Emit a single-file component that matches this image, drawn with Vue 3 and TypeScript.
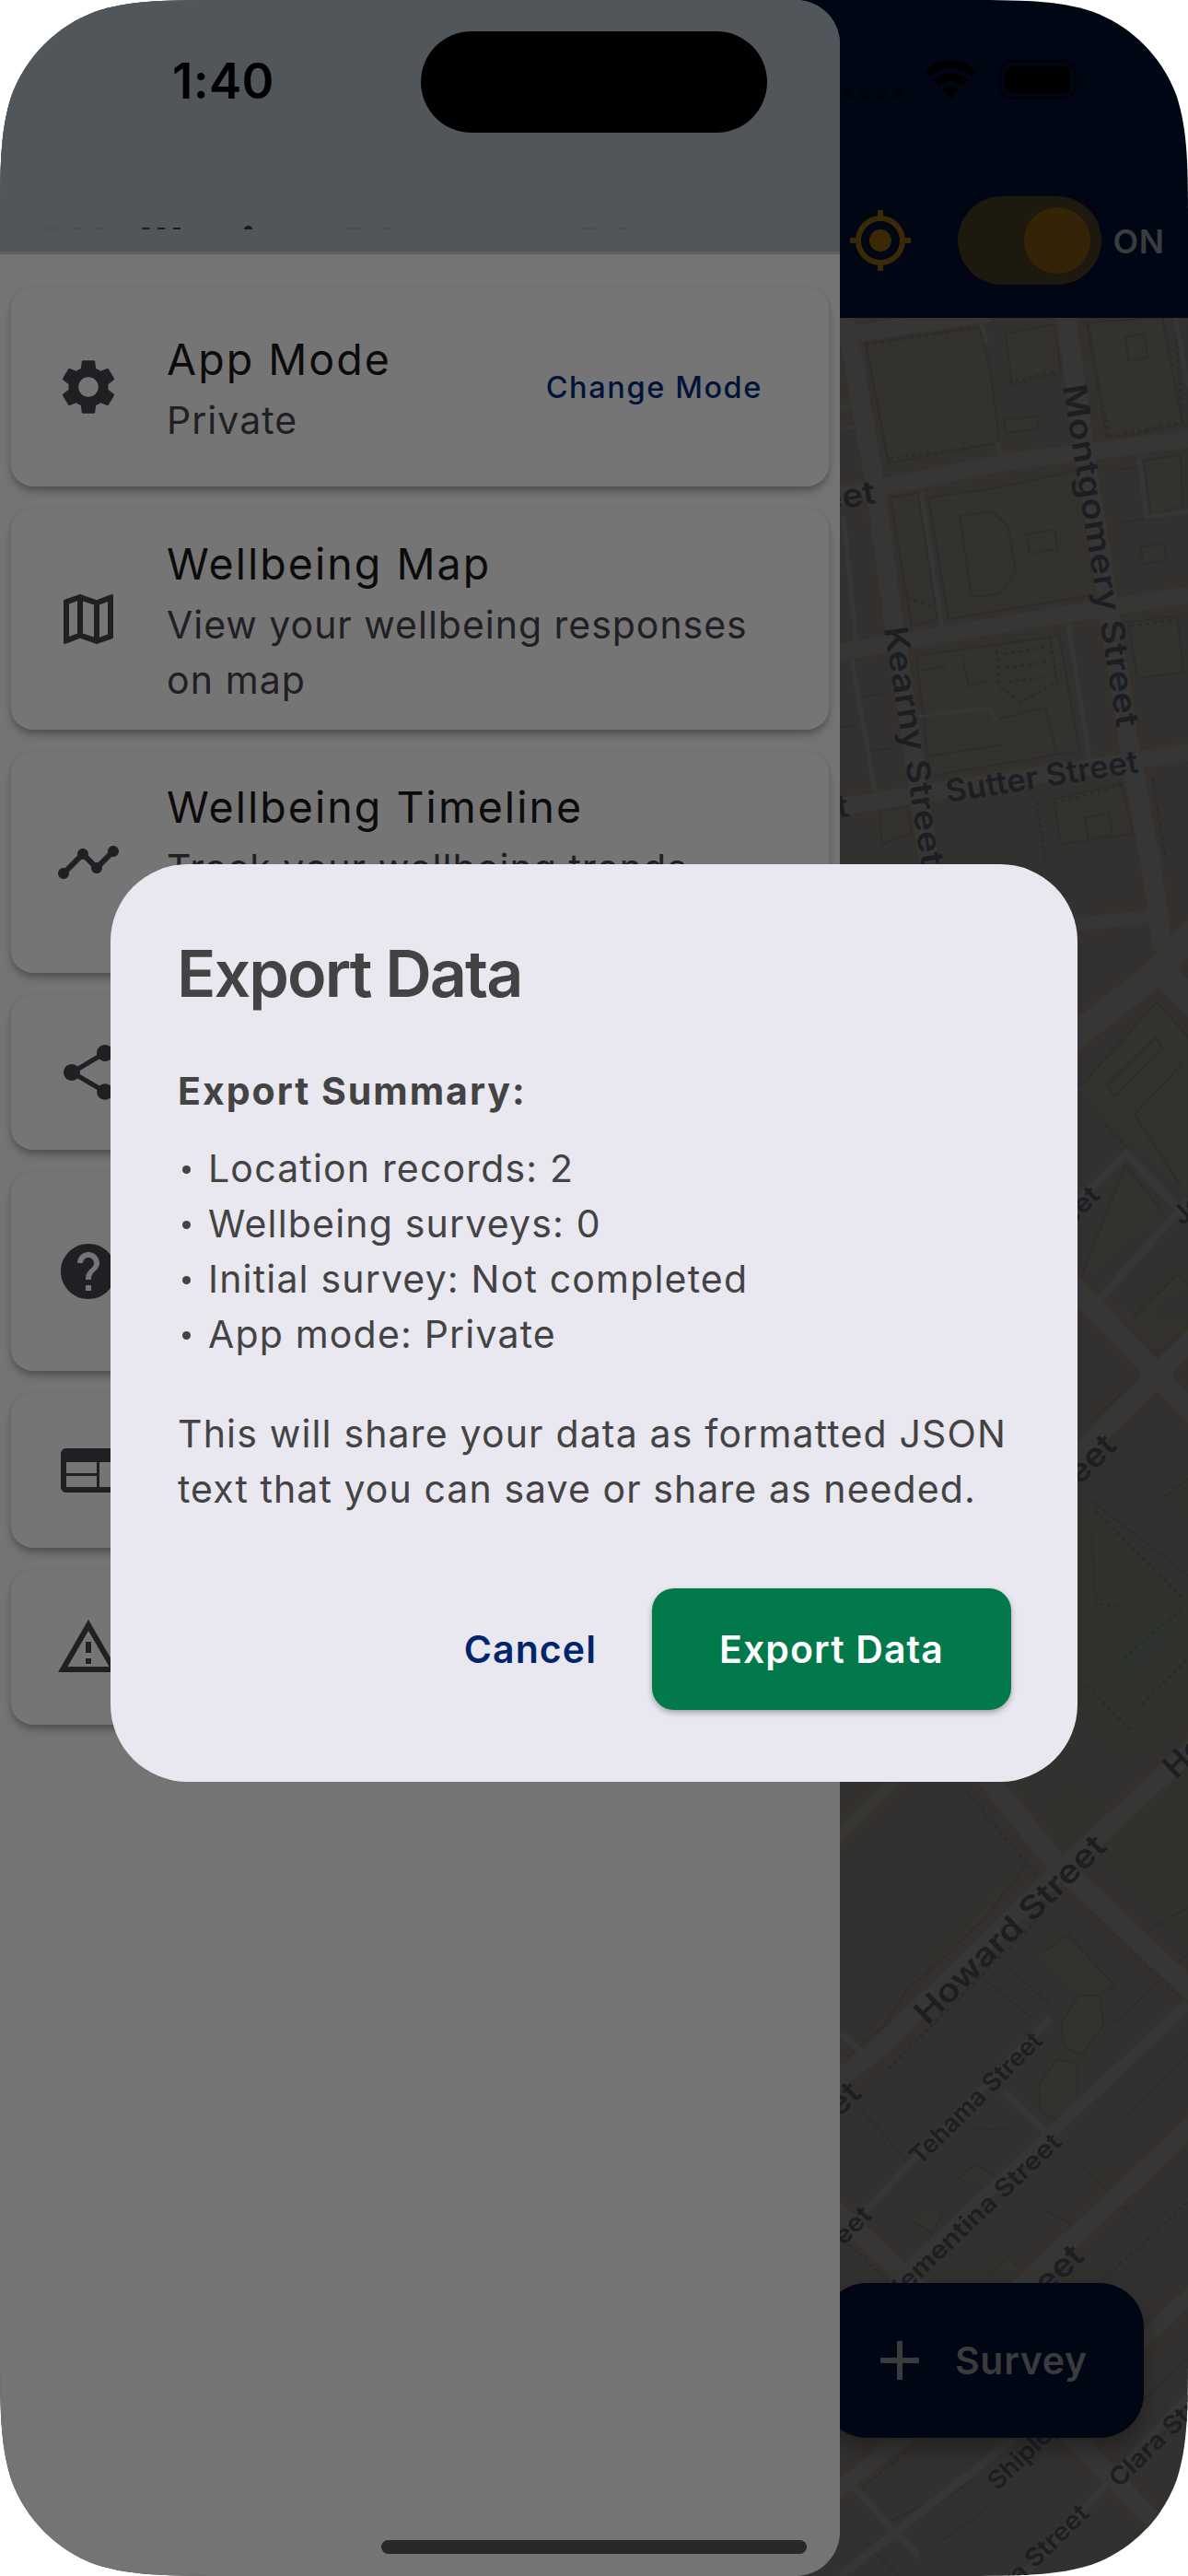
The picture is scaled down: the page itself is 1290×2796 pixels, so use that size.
<script setup lang="ts">
interface MenuLine {
  text: string
  spacing: number
}

interface MenuEntry {
  icon: string
  height: number
  title?: string
  lines?: MenuLine[]
  action?: string
}

interface Road {
  d: string
  w: number
  casing?: boolean
}

interface Label {
  text: string
  x: number
  y: number
  angle: number
  size: number
  length?: number
  end?: boolean
}

const icons = {
  gear: 'M19.14 12.94c.04-.3.06-.61.06-.94 0-.32-.02-.64-.07-.94l2.03-1.58c.18-.14.23-.41.12-.61l-1.92-3.32c-.12-.22-.37-.29-.59-.22l-2.39.96c-.5-.38-1.03-.7-1.62-.94l-.36-2.54c-.04-.24-.24-.41-.48-.41h-3.84c-.24 0-.43.17-.47.41l-.36 2.54c-.59.24-1.13.57-1.62.94l-2.39-.96c-.22-.08-.47 0-.59.22L2.74 8.87c-.12.21-.08.47.12.61l2.03 1.58c-.05.3-.09.63-.09.94s.02.64.07.94l-2.03 1.58c-.18.14-.23.41-.12.61l1.92 3.32c.12.22.37.29.59.22l2.39-.96c.5.38 1.03.7 1.62.94l.36 2.54c.05.24.24.41.48.41h3.84c.24 0 .44-.17.47-.41l.36-2.54c.59-.24 1.13-.56 1.62-.94l2.39.96c.22.08.47 0 .59-.22l1.92-3.32c.12-.22.07-.47-.12-.61l-2.01-1.58zM12 15.6c-1.98 0-3.6-1.62-3.6-3.6s1.62-3.6 3.6-3.6 3.6 1.62 3.6 3.6-1.62 3.6-3.6 3.6z',
  map: 'M20.5 3l-.16.03L15 5.1 9 3 3.36 4.9c-.21.07-.36.25-.36.48V20.5c0 .28.22.5.5.5l.16-.03L9 18.9l6 2.1 5.64-1.9c.21-.07.36-.25.36-.48V3.5c0-.28-.22-.5-.5-.5zM10 5.47l4 1.4v11.66l-4-1.4V5.47zm-5 .99l3-1.01v11.7l-3 1.16V6.46zm14 11.08l-3 1.01V6.86l3-1.16v11.84z',
  timeline: 'M23 8c0 1.1-.9 2-2 2-.18 0-.35-.02-.51-.07l-3.56 3.55c.05.16.07.34.07.52 0 1.1-.9 2-2 2s-2-.9-2-2c0-.18.02-.36.07-.52l-2.55-2.55c-.16.05-.34.07-.52.07s-.36-.02-.52-.07l-4.55 4.56c.05.16.07.33.07.51 0 1.1-.9 2-2 2s-2-.9-2-2 .9-2 2-2c.18 0 .35.02.51.07l4.56-4.55C8.02 9.36 8 9.18 8 9c0-1.1.9-2 2-2s2 .9 2 2c0 .18-.02.36-.07.52l2.55 2.55c.16-.05.34-.07.52-.07s.36.02.52.07l3.55-3.56C19.02 8.35 19 8.18 19 8c0-1.1.9-2 2-2s2 .9 2 2z',
  share: 'M18 16.08c-.76 0-1.44.3-1.96.77L8.91 12.7c.05-.23.09-.46.09-.7s-.04-.47-.09-.7l7.05-4.11c.54.5 1.25.81 2.04.81 1.66 0 3-1.34 3-3s-1.34-3-3-3-3 1.34-3 3c0 .24.04.47.09.7L8.04 9.81C7.5 9.31 6.79 9 6 9c-1.66 0-3 1.34-3 3s1.34 3 3 3c.79 0 1.5-.31 2.04-.81l7.12 4.16c-.05.21-.08.43-.08.65 0 1.61 1.31 2.92 2.92 2.92s2.92-1.31 2.92-2.92-1.31-2.92-2.92-2.92z',
  help: 'M12 2C6.48 2 2 6.48 2 12s4.48 10 10 10 10-4.48 10-10S17.52 2 12 2zm1 17h-2v-2h2v2zm2.07-7.75l-.9.92C13.45 12.9 13 13.5 13 15h-2v-.5c0-1.1.45-2.1 1.17-2.83l1.24-1.26c.37-.36.59-.86.59-1.41 0-1.1-.9-2-2-2s-2 .9-2 2H8c0-2.21 1.79-4 4-4s4 1.79 4 4c0 .88-.36 1.68-.93 2.25z',
  web: 'M20 4H4c-1.1 0-1.99.9-1.99 2L2 18c0 1.1.9 2 2 2h16c1.1 0 2-.9 2-2V6c0-1.1-.9-2-2-2zm-5 14H4v-4h11v4zm0-5H4V9h11v4zm5 5h-4V9h4v9z',
  warning: 'M12 5.99L19.53 19H4.47L12 5.99M12 2L1 21h22L12 2zm1 14h-2v2h2v-2zm0-6h-2v4h2v-4z',
  target: 'M12 8c-2.21 0-4 1.79-4 4s1.79 4 4 4 4-1.79 4-4-1.79-4-4-4zm8.94 3c-.46-4.17-3.77-7.48-7.94-7.94V1h-2v2.06C6.83 3.52 3.52 6.83 3.06 11H1v2h2.06c.46 4.17 3.77 7.48 7.94 7.94V23h2v-2.06c4.17-.46 7.48-3.77 7.94-7.94H23v-2h-2.06zM12 19c-3.87 0-7-3.13-7-7s3.13-7 7-7 7 3.13 7 7-3.13 7-7 7z',
  plus: 'M19 13h-6v6h-2v-6H5v-2h6V5h2v6h6v2z',
}

const menu: MenuEntry[] = [
  { icon: icons.gear, height: 216, title: 'App Mode', lines: [{ text: 'Private', spacing: 1.05 }], action: 'Change Mode' },
  {
    icon: icons.map,
    height: 240,
    title: 'Wellbeing Map',
    lines: [{ text: 'View your wellbeing responses', spacing: 0.98 }, { text: 'on map', spacing: 1.1 }],
  },
  {
    icon: icons.timeline,
    height: 240,
    title: 'Wellbeing Timeline',
    lines: [{ text: 'Track your wellbeing trends', spacing: 1.05 }, { text: '', spacing: 0 }],
  },
  { icon: icons.share, height: 168 },
  { icon: icons.help, height: 216 },
  { icon: icons.web, height: 168 },
  { icon: icons.warning, height: 168 },
]

const summary = [
  'Location records: 2',
  'Wellbeing surveys: 0',
  'Initial survey: Not completed',
  'App mode: Private',
]

const roads: Road[] = [
  { d: 'M1000 534L1023 680M1160 678L1183 822M925 716L950 858M1237 498L1245 561L1290 555M1065 350L1072 372M1083 480L1088 500M916 560L930 700M1276 345L1290 420', w: 5 },
  { d: 'M996 778L1075 768L1082 782M912 442L930 440M912 466L930 463', w: 4 },
  { d: 'M1170 1304L1223 1252L1290 1322M1190 1415L1290 1303', w: 9 },
  { d: 'M912 2428L1140 2191M1090 2270L1145 2322M912 2206L945 2236M927 2700L997 2774', w: 8 },
  { d: 'M970 2477L1290 2175', w: 13 },
  { d: 'M912 2796L1110 2640M1110 2796L1290 2600', w: 9 },
  { d: 'M917 345L925 380L950 526L972 688L997 854L1012 960', w: 20, casing: true },
  { d: 'M1157 340L1179 498L1203 655L1227 814L1250 940L1263 1030', w: 21, casing: true },
  { d: 'M905 366L1075 340', w: 18, casing: true },
  { d: 'M905 538L957 529L1090 502L1295 476', w: 18, casing: true },
  { d: 'M905 709L1100 676L1295 645', w: 18, casing: true },
  { d: 'M905 877L1100 845L1295 816', w: 18, casing: true },
  { d: 'M1150 1005L1258 994', w: 14, casing: true },
  { d: 'M1140 1146L1253 1058L1300 1008M1260 1052L1300 1094', w: 28, casing: true },
  { d: 'M1150 1380L1248 1483L1300 1540M1150 1603L1258 1490L1300 1448', w: 22, casing: true },
  { d: 'M905 1998L985 1920', w: 12, casing: true },
  { d: 'M905 2261L950 2227L1143 2038L1300 1893', w: 20, casing: true },
  { d: 'M1060 1915L1145 2020L1300 2166', w: 22, casing: true },
  { d: 'M1090 2500L1300 2302', w: 20, casing: true },
  { d: 'M905 2396L1167 2648L1300 2784', w: 20, casing: true },
  { d: 'M905 2706L1090 2560M1225 2556L1300 2484', w: 16, casing: true },
]

const labels: Label[] = [
  { text: 'Montgomery Street', x: 1154, y: 419, angle: 81, size: 35, length: 376 },
  { text: 'Kearny Street', x: 960, y: 682, angle: 81, size: 35, length: 262 },
  { text: 'Sutter Street', x: 1029, y: 871, angle: -9, size: 34, length: 211 },
  { text: 'Street', x: 952, y: 546, angle: -9, size: 35, length: 112, end: true },
  { text: 'Street', x: 923, y: 886, angle: -9, size: 34, length: 108, end: true },
  { text: 'Street', x: 1196, y: 1299, angle: -45, size: 28, length: 88, end: true },
  { text: 'Jessie Street', x: 1284, y: 1331, angle: -45, size: 28 },
  { text: 'Street', x: 1214, y: 1571, angle: -45, size: 35, length: 112, end: true },
  { text: 'Howard Street', x: 1277, y: 1932, angle: -44, size: 35 },
  { text: 'Howard Street', x: 1007, y: 2199, angle: -44.5, size: 35, length: 275 },
  { text: 'Street', x: 937, y: 2274, angle: -44, size: 35, length: 112, end: true },
  { text: 'Tehama Street', x: 999, y: 2351, angle: -45, size: 27, length: 190 },
  { text: 'Street', x: 948, y: 2406, angle: -45, size: 27, length: 86, end: true },
  { text: 'Clementina Street', x: 1154, y: 2327, angle: -43.5, size: 27, length: 262, end: true },
  { text: 'Street', x: 1179, y: 2451, angle: -44, size: 35, length: 112, end: true },
  { text: 'Shipley Street', x: 1083, y: 2704, angle: -44, size: 27, length: 190 },
  { text: 'Clara Street', x: 1215, y: 2701, angle: -44, size: 27, length: 165 },
  { text: 'Clara Street', x: 1184, y: 2730, angle: -44, size: 27, length: 165, end: true },
]
</script>

<template>
  <div class="screen">
    <div class="app">
      <header class="appbar">
        <svg class="icon target" viewBox="0 0 24 24"><path :d="icons.target" /></svg>
        <div class="switch"><span class="thumb"></span></div>
        <span class="on">ON</span>
      </header>
      <svg class="map" viewBox="0 345 1290 2451">
        <rect y="345" width="1290" height="2451" fill="#32312f" />
        <path class="park" d="M1165 1630L1185 1635L1290 1743V1865L1227 1909L1165 1852Z" />
        <path class="park" d="M1270 1625L1290 1612V1648Z" />
        <path class="trees" d="M1135 1968L1170 1945L1200 1965L1160 2005ZM1215 1990L1290 1925V2105L1212 2030Z" />
        <path d="M1208 1826L1275 1757L1262 1780Z" fill="#2b3134" />
        <g class="blocks">
          <path d="M940 372L1063 354L1075 400L1085 480L965 503Z" />
          <path d="M1092 362L1145 352L1152 405L1099 417Z" />
          <path d="M1180 350L1262 345L1284 460L1202 478Z" />
          <path d="M1222 366L1242 362L1246 388L1226 392Z" />
          <path d="M1090 456L1126 452L1128 465L1092 470Z" />
          <path d="M967 540L997 535L1018 672L990 680Z" />
          <path d="M1008 540L1080 530L1172 510L1190 645L1030 672Z" />
          <path d="M1042 560L1078 555L1095 572L1103 620L1085 645L1055 648Z" />
          <path d="M1114 580L1146 575L1148 596L1118 601Z" />
          <path d="M1242 500L1282 494L1284 550L1250 560Z" />
          <path d="M1215 510L1238 506M1212 568L1290 556M1238 594L1264 590L1266 608L1242 612Z" />
          <path d="M995 712L1150 690L1172 815L1010 842Z" />
          <path d="M1225 676L1278 668L1285 730L1235 736Z" />
          <path d="M1045 715L1052 745L1074 738M1000 728L1028 722M1085 780L1135 768L1148 820" />
          <path d="M1000 822L1090 808M938 756L965 752M946 815L970 812M912 790L930 786" />
          <path d="M1144 868L1218 850L1230 905L1152 916Z" />
          <path d="M1178 888L1205 882L1208 905L1182 912ZM955 880L985 876L990 905L958 916Z" />
          <path d="M1172 1180L1256 1088L1290 1125V1300M1202 1178L1255 1126L1263 1138L1210 1190ZM1232 1210L1284 1154M1232 1210L1284 1290" />
          <path d="M1172 1390L1222 1265L1262 1315M1200 1418L1256 1470L1290 1440M1230 1430L1280 1382L1290 1395" />
          <path d="M1182 1546L1238 1494M1180 1625L1290 1710M1265 1625L1290 1605" />
          <path d="M920 2232L960 2198L985 2160L1030 2120L1070 2080L1118 2020M1065 2145L1120 2190M1095 2135L1142 2178M1130 2120L1160 2100L1210 2155L1180 2175" />
          <path d="M1152 2196L1172 2166L1195 2166L1198 2198L1175 2230L1155 2222Z" />
          <path d="M1128 2262L1148 2235L1170 2240L1170 2285L1150 2302L1130 2292Z" />
          <path d="M1240 2100L1290 2070M1212 2195L1290 2120M1220 2300L1290 2230M1175 2350L1235 2410M1135 2400L1185 2425" />
          <path d="M990 2410L1012 2424L1025 2400M1040 2365L1060 2348L1080 2362M935 2290L985 2345M1055 2310L1095 2312M1075 2470L1095 2450L1120 2475" />
          <path d="M960 2740L1000 2720L1000 2730L1060 2690M940 2760L975 2796M1020 2760L1075 2720M1225 2620L1290 2560M1240 2660L1290 2620" />
        </g>
        <g class="dots">
          <path d="M940 374L1062 356M940 374L964 498L1080 482M1094 416L1148 402M1182 352L1204 474M1204 474L1284 458M1276 350L1284 455" />
          <path d="M1082 700L1140 692L1148 740L1108 762L1085 745ZM1090 710L1135 702M1092 725L1140 718M1095 740L1135 735" />
          <path d="M1228 680L1278 672M1145 872L1220 852M1126 870L1135 935M1252 845L1265 930M985 648L1015 660" />
          <path d="M1190 1640L1285 1735M1185 1665L1190 1740L1220 1745M1220 1800L1285 1745M1180 1830L1230 1880M1240 1850L1290 1800M1200 1220L1225 1245" />
          <path d="M1050 1945L1130 2040M965 2245L1135 2075M1180 2070L1290 2175M1180 2490L1290 2390M915 2430L965 2477M930 2705L985 2660" />
        </g>
        <template v-for="(r, i) in roads" :key="'c' + i">
          <path v-if="r.casing" :d="r.d" fill="none" stroke="#393128" :stroke-width="r.w + 4" />
        </template>
        <path v-for="(r, i) in roads" :key="'r' + i" :d="r.d" fill="none" stroke="#363637" :stroke-width="r.w" />
        <text
          v-for="(l, i) in labels"
          :key="'t' + i"
          class="street"
          :transform="`translate(${l.x} ${l.y}) rotate(${l.angle})`"
          :font-size="l.size"
          :text-anchor="l.end ? 'end' : 'start'"
          :textLength="l.length"
          lengthAdjust="spacingAndGlyphs"
        >{{ l.text }}</text>
      </svg>
      <div class="fab">
        <svg class="icon" viewBox="0 0 24 24"><path :d="icons.plus" /></svg>
        <span>Survey</span>
      </div>
    </div>

    <aside class="drawer">
      <div class="drawer-head">
        <div class="drawer-title"><span class="faint">W</span>ellbeing <span class="faint">M</span>apper <span class="faint">M</span>enu</div>
      </div>
      <nav class="cards">
        <div v-for="(m, i) in menu" :key="i" class="card" :style="{ height: m.height + 'px' }">
          <svg class="icon" viewBox="0 0 24 24"><path :d="m.icon" /></svg>
          <div v-if="m.title" class="card-text">
            <div class="card-title">{{ m.title }}</div>
            <div v-for="(l, j) in m.lines" :key="j" class="card-line" :style="{ letterSpacing: l.spacing + 'px' }">{{ l.text }}</div>
          </div>
          <span v-if="m.action" class="card-action">{{ m.action }}</span>
        </div>
      </nav>
    </aside>

    <div class="clock">1:40</div>
    <div class="island"></div>
    <svg class="status" viewBox="912 60 270 52">
      <g fill="#00030b">
        <circle cx="921.3" cy="102" r="5.5" /><circle cx="939.7" cy="102" r="5.5" />
        <circle cx="957.7" cy="102" r="5.5" /><circle cx="975.7" cy="102" r="5.5" />
      </g>
      <g fill="#000">
        <path d="M1032.500 66C1043.500 66 1053.500 70 1061 77.500L1055.500 83C1049.300 77.200 1041.200 74 1032.500 74S1015.700 77.200 1009.500 83L1004 77.500C1011.500 70 1021.500 66 1032.500 66Z" />
        <path d="M1032.500 79.500C1039.700 79.500 1046.200 82.200 1051.200 87L1045.500 92.700C1042 89.500 1037.500 87.700 1032.500 87.700S1023 89.500 1019.500 92.700L1013.800 87C1018.800 82.200 1025.300 79.500 1032.500 79.500Z" />
        <path d="M1032.500 93.500C1035.900 93.500 1039 94.800 1041.300 97L1033.700 106.200Q1032.500 107.400 1031.300 106.200L1023.700 97C1026 94.800 1029.100 93.500 1032.500 93.500Z" />
        <rect x="1091" y="72" width="71" height="29" rx="8.500" />
      </g>
      <rect x="1085.500" y="66.500" width="82" height="40" rx="13" fill="none" stroke="#00030b" stroke-width="3" />
      <path d="M1172 80Q1177 82 1177 86.500T1172 93Z" fill="#00030b" />
    </svg>

    <div class="overlay">
      <section class="dialog">
        <h1>Export Data</h1>
        <h2>Export Summary:</h2>
        <ul>
          <li v-for="s in summary" :key="s"><span class="bullet"></span>{{ s }}</li>
        </ul>
        <p>
          This will share your data as formatted JSON<br />
          <span class="tight">text that you can save or share as needed.</span>
        </p>
        <div class="actions">
          <button class="cancel">Cancel</button>
          <button class="export">Export Data</button>
        </div>
      </section>
    </div>
    <div class="home"></div>
  </div>
</template>

<style>
body {
  background: #fff;
}
</style>

<style scoped>
.screen {
  position: relative;
  width: 1290px;
  height: 2796px;
  overflow: hidden;
  font-family: Inter, 'Liberation Sans', sans-serif;
  clip-path: path('M252 0H1038C1110 0 1147 0 1186 12.400C1228.500 28 1262 61.500 1277.600 104C1290 143 1290 180 1290 252V2544C1290 2616 1290 2653 1277.600 2692C1262 2734.500 1228.500 2768 1186 2783.600C1147 2796 1110 2796 1038 2796H252C180 2796 143 2796 104 2783.600C61.500 2768 28 2734.500 12.400 2692C0 2653 0 2616 0 2544V252C0 180 0 143 12.400 104C28 61.500 61.500 28 104 12.400C143 0 180 0 252 0Z');
}
.icon {
  width: 72px;
  height: 72px;
  flex: none;
  fill: currentColor;
}
.app {
  display: flex;
  flex-direction: column;
  height: 2796px;
}
.appbar {
  box-sizing: border-box;
  height: 345px;
  flex: none;
  display: flex;
  align-items: center;
  justify-content: flex-end;
  padding: 177px 25px 0 0;
  background: #000613;
}
.target {
  color: #3a2905;
}
.switch {
  box-sizing: border-box;
  display: flex;
  align-items: center;
  justify-content: flex-end;
  width: 156px;
  height: 96px;
  margin-left: 48px;
  padding-right: 12px;
  border-radius: 48px;
  background: #1e190e;
}
.thumb {
  width: 72px;
  height: 72px;
  border-radius: 50%;
  background: #342405;
}
.on {
  margin-left: 12px;
  padding-top: 2px;
  font-size: 36px;
  font-weight: 600;
  letter-spacing: 0.8px;
  color: #3b3c3f;
}
.map {
  display: block;
  width: 1290px;
  height: 2451px;
}
.park {
  fill: #2f322d;
}
.trees {
  fill: #30322d;
}
.blocks path {
  fill: #33322f;
  stroke: #2e2d2b;
  stroke-width: 2;
}
.dots path {
  fill: none;
  stroke: #2b2b29;
  stroke-width: 2.5;
  stroke-dasharray: 4 4;
}
.street {
  font-family: Inter, sans-serif;
  font-weight: 600;
  fill: #1c1e22;
}
.fab {
  position: absolute;
  left: 893px;
  top: 2478px;
  box-sizing: border-box;
  display: flex;
  align-items: center;
  width: 349px;
  height: 168px;
  padding-left: 48px;
  border-radius: 48px;
  background: #000613;
  color: #3a3b3d;
  font-size: 41px;
  font-weight: 600;
  letter-spacing: 0.7px;
  box-shadow: 0 12px 24px rgba(0, 0, 0, 0.3);
}
.fab span {
  margin-left: 24px;
}
.drawer {
  position: absolute;
  left: 0;
  top: 0;
  width: 912px;
  height: 2796px;
  overflow: hidden;
  border-radius: 0 48px 48px 0;
  background: #747474;
}
.drawer-head {
  box-sizing: border-box;
  height: 276px;
  padding: 243px 48px 0 50px;
  border-bottom: 3px solid #5f6063;
  background: #50565a;
}
.drawer-title {
  height: 6px;
  overflow: hidden;
  white-space: nowrap;
  font-size: 64px;
  line-height: 56px;
  font-weight: 600;
  color: #1b1c1e;
}
.faint {
  color: #494e51;
}
.cards {
  display: flex;
  flex-direction: column;
  gap: 24px;
  padding: 36px 12px 0;
}
.card {
  box-sizing: border-box;
  display: flex;
  align-items: center;
  padding: 0 72px 0 48px;
  border-radius: 24px;
  background: #757575;
  color: #1f2024;
  box-shadow: 0 6px 9px -1px rgba(0, 0, 0, 0.28), 0 2px 6px rgba(0, 0, 0, 0.06);
}
.card-text {
  flex: 1;
  margin-left: 49px;
  white-space: nowrap;
}
.card-title {
  font-size: 46.5px;
  line-height: 72px;
  letter-spacing: 2.05px;
  color: #0b0b0c;
}
.card-line {
  height: 60px;
  font-size: 41px;
  line-height: 60px;
}
.card-action {
  font-size: 32.5px;
  font-weight: 500;
  letter-spacing: 1.6px;
  color: #00143a;
}
.clock {
  position: absolute;
  left: 187px;
  top: 56px;
  font-size: 53px;
  line-height: 64px;
  font-weight: 600;
  letter-spacing: 0.3px;
  color: #000;
}
.island {
  position: absolute;
  left: 457px;
  top: 34px;
  width: 376px;
  height: 110px;
  border-radius: 55px;
  background: #000;
}
.status {
  position: absolute;
  left: 912px;
  top: 60px;
  width: 270px;
  height: 52px;
}
.overlay {
  position: absolute;
  left: 0;
  top: 0;
  width: 1290px;
  display: flex;
  justify-content: center;
  padding-top: 938px;
}
.dialog {
  box-sizing: border-box;
  width: 1050px;
  height: 996px;
  padding: 71px 72px 0 73px;
  border-radius: 84px;
  background: #e9e7f0;
  color: #434343;
}
h1,
h2,
ul,
p {
  margin: 0;
  padding: 0;
  white-space: nowrap;
}
h1 {
  margin-left: -1px;
  font-size: 70px;
  line-height: 96px;
  font-weight: 600;
  letter-spacing: -1.95px;
}
h2 {
  margin-top: 49px;
  font-size: 41px;
  line-height: 60px;
  font-weight: 700;
  letter-spacing: 2px;
}
ul {
  margin-top: 24px;
  list-style: none;
}
li {
  display: flex;
  align-items: center;
  height: 60px;
  font-size: 41px;
  line-height: 60px;
  letter-spacing: 1.18px;
}
.bullet {
  width: 9px;
  height: 9px;
  margin: 3px 19px 0 5px;
  border-radius: 50%;
  background: #434343;
}
p {
  margin-top: 48px;
  font-size: 41px;
  line-height: 60px;
  letter-spacing: 1.17px;
}
.tight {
  letter-spacing: 1.08px;
}
.actions {
  display: flex;
  justify-content: flex-end;
  align-items: center;
  margin-top: 78px;
}
button {
  border: 0;
  margin: 0;
  font-family: inherit;
  font-size: 41px;
  font-weight: 600;
  letter-spacing: 1.1px;
}
.cancel {
  padding: 0 36px;
  margin-right: 24px;
  background: transparent;
  color: #00256b;
}
.export {
  width: 390px;
  height: 132px;
  padding: 0;
  border-radius: 24px;
  background: #02794b;
  color: #fff;
  box-shadow: 0 3px 6px rgba(0, 0, 0, 0.3);
}
.home {
  position: absolute;
  left: 414px;
  top: 2757px;
  width: 462px;
  height: 15px;
  border-radius: 8px;
  background: #292929;
}
</style>
